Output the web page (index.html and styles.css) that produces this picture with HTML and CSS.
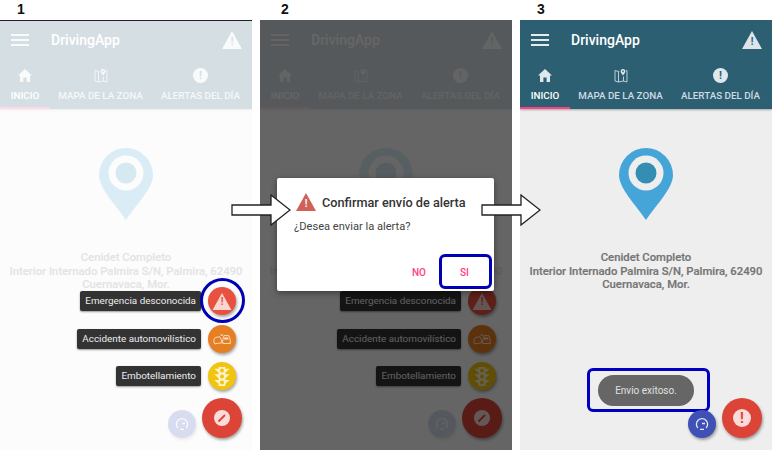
FILE: index.html
```html
<!DOCTYPE html>
<html lang="es">
<head>
  <meta charset="UTF-8">
  <title>DrivingApp</title>
  <link rel="stylesheet" href="styles.css">
</head>
<body>
  <svg class="sprites" width="0" height="0">
    <symbol id="i-warn" viewBox="0 0 20 18"><path fill="currentColor" d="M10 0 20 18H0Z"/></symbol>
    <symbol id="i-home" viewBox="0 0 14 13"><path fill="currentColor" d="M7 0 14 6.500H12V13H8.600V8.500H5.400V13H2V6.500H0Z"/></symbol>
    <symbol id="i-map" viewBox="0 0 14 15"><path fill="none" stroke="currentColor" stroke-width="0.8" d="M5.500 3 4.500 3.600 1 2.500v10.500l3.500 1 5-1 3.500 1V2.500L11.800 3M4.500 3.600V14M9.500 8.500V13"/><path fill="currentColor" fill-rule="evenodd" d="M9 1a2.300 2.300 0 0 1 2.300 2.300C11.300 5 9 7.500 9 7.500S6.700 5 6.700 3.300A2.300 2.300 0 0 1 9 1ZM9 2.500a.8.800 0 1 0 .01 0Z"/></symbol>
    <symbol id="i-gauge" viewBox="0 0 14 12"><path fill="none" stroke="currentColor" stroke-width="1.300" d="M2.800 10A5.600 5.600 0 1 1 11.200 10"/><path fill="none" stroke="currentColor" stroke-width="1.300" d="M5 11.300H9M7 5.500H10"/></symbol>
    <symbol id="i-crash" viewBox="0 0 24 16"><path fill="none" stroke="currentColor" stroke-width="1.200" d="M1 9.500 3 6l6-1 2 4 1 4-10 1.500ZM13 9l1.500-5.500H21L23 9v5H13Z"/><path fill="currentColor" d="M10 0 11.500 2.500 13.500 1 12.500 4 10.500 3.500ZM15 6h5l.8 2.500H14.400Z"/></symbol>
    <symbol id="i-light" viewBox="0 0 18 22"><path fill="currentColor" d="M5 0H13V22H5ZM0 2H5V6.500ZM18 2H13V6.500ZM0 8.500H5V13ZM18 8.500H13V13ZM0 15H5V19.500ZM18 15H13V19.500Z"/><circle cx="9" cy="4" r="2.300" fill="#f1c40f"/><circle cx="9" cy="11" r="2.300" fill="#f1c40f"/><circle cx="9" cy="18" r="2.300" fill="#f1c40f"/></symbol>
    <symbol id="i-pencil" viewBox="0 0 16 16"><circle cx="8" cy="8" r="8" fill="currentColor"/><path fill="none" stroke="#db4437" stroke-width="1.800" d="M4.500 11.500 11 5"/></symbol>
    <symbol id="i-pin" viewBox="0 0 54 72"><path fill="#45a5d8" d="M27 0A27 27 0 0 1 54 27C54 40 38 56 27 72 16 56 0 40 0 27A27 27 0 0 1 27 0Z"/><circle cx="27" cy="25" r="17.500" fill="#eee"/><circle cx="27" cy="25" r="10.500" fill="#348eb3"/></symbol>
    <symbol id="i-arrow" viewBox="0 0 60 32"><path fill="#fff" stroke="#222" stroke-width="1.300" d="M1 11H40V1L59 16 40 31V21H1Z"/></symbol>
  </svg>

  <div class="page">

    <!-- paso 1 -->
    <section class="step">
      <div class="num num-line">1</div>
      <div class="phone">
        <header class="appbar">
          <div class="toolbar">
            <div class="burger"><span></span><span></span><span></span></div>
            <div class="app-title">DrivingApp</div>
            <div class="warn"><svg class="warn-tri"><use href="#i-warn"/></svg><b>!</b></div>
          </div>
          <nav class="tabs">
            <div class="tab tab-on"><svg class="tab-ico"><use href="#i-home"/></svg>INICIO</div>
            <div class="tab tab-map"><svg class="tab-ico"><use href="#i-map"/></svg>MAPA DE LA ZONA</div>
            <div class="tab"><span class="tab-dot">!</span>ALERTAS DEL DÍA</div>
          </nav>
        </header>
        <main class="content">
          <svg class="pin"><use href="#i-pin"/></svg>
          <p class="address">Cenidet Completo<br>Interior Internado Palmira S/N, Palmira, 62490<br>Cuernavaca, Mor.</p>
        </main>
        <div class="fabs">
          <div class="fab fab-small"><svg class="gauge"><use href="#i-gauge"/></svg></div>
          <div class="fab-gap"></div>
        </div>
        <div class="veil"></div>
        <div class="fabs">
          <div class="fab fab-main"><svg class="pencil"><use href="#i-pencil"/></svg></div>
        </div>
        <div class="fab-menu">
          <div class="menu-row">
            <span class="tip">Emergencia desconocida</span>
            <div class="fab fab-mini fab-red"><svg class="mini-warn"><use href="#i-warn"/></svg><b>!</b></div>
          </div>
          <div class="menu-row">
            <span class="tip">Accidente automovilístico</span>
            <div class="fab fab-mini fab-orange"><svg class="crash"><use href="#i-crash"/></svg></div>
          </div>
          <div class="menu-row">
            <span class="tip">Embotellamiento</span>
            <div class="fab fab-mini fab-yellow"><svg class="light"><use href="#i-light"/></svg></div>
          </div>
        </div>
        <div class="ring"></div>
      </div>
    </section>

    <!-- paso 2 -->
    <section class="step">
      <div class="num">2</div>
      <div class="phone">
        <header class="appbar">
          <div class="toolbar">
            <div class="burger"><span></span><span></span><span></span></div>
            <div class="app-title">DrivingApp</div>
            <div class="warn"><svg class="warn-tri"><use href="#i-warn"/></svg><b>!</b></div>
          </div>
          <nav class="tabs">
            <div class="tab tab-on"><svg class="tab-ico"><use href="#i-home"/></svg>INICIO</div>
            <div class="tab tab-map"><svg class="tab-ico"><use href="#i-map"/></svg>MAPA DE LA ZONA</div>
            <div class="tab"><span class="tab-dot">!</span>ALERTAS DEL DÍA</div>
          </nav>
        </header>
        <main class="content">
          <svg class="pin"><use href="#i-pin"/></svg>
          <p class="address">Cenidet Completo<br>Interior Internado Palmira S/N, Palmira, 62490<br>Cuernavaca, Mor.</p>
        </main>
        <div class="fabs">
          <div class="fab fab-small"><svg class="gauge"><use href="#i-gauge"/></svg></div>
          <div class="fab-gap"></div>
        </div>
        <div class="veil"></div>
        <div class="fabs">
          <div class="fab fab-main"><svg class="pencil"><use href="#i-pencil"/></svg></div>
        </div>
        <div class="fab-menu">
          <div class="menu-row">
            <span class="tip">Emergencia desconocida</span>
            <div class="fab fab-mini fab-red"><svg class="mini-warn"><use href="#i-warn"/></svg><b>!</b></div>
          </div>
          <div class="menu-row">
            <span class="tip">Accidente automovilístico</span>
            <div class="fab fab-mini fab-orange"><svg class="crash"><use href="#i-crash"/></svg></div>
          </div>
          <div class="menu-row">
            <span class="tip">Embotellamiento</span>
            <div class="fab fab-mini fab-yellow"><svg class="light"><use href="#i-light"/></svg></div>
          </div>
        </div>
        <div class="scrim"></div>
        <div class="dialog">
          <div class="dialog-head">
            <div class="dialog-ico"><svg class="dialog-tri"><use href="#i-warn"/></svg><b>!</b></div>
            <h3>Confirmar envío de alerta</h3>
          </div>
          <p class="dialog-text">¿Desea enviar la alerta?</p>
          <div class="dialog-actions">
            <span class="btn btn-no">NO</span>
            <span class="btn btn-si">SI</span>
          </div>
        </div>
      </div>
    </section>

    <!-- paso 3 -->
    <section class="step">
      <div class="num">3</div>
      <div class="phone">
        <header class="appbar">
          <div class="toolbar">
            <div class="burger"><span></span><span></span><span></span></div>
            <div class="app-title">DrivingApp</div>
            <div class="warn"><svg class="warn-tri"><use href="#i-warn"/></svg><b>!</b></div>
          </div>
          <nav class="tabs">
            <div class="tab tab-on"><svg class="tab-ico"><use href="#i-home"/></svg>INICIO</div>
            <div class="tab tab-map"><svg class="tab-ico"><use href="#i-map"/></svg>MAPA DE LA ZONA</div>
            <div class="tab"><span class="tab-dot">!</span>ALERTAS DEL DÍA</div>
          </nav>
        </header>
        <main class="content">
          <svg class="pin"><use href="#i-pin"/></svg>
          <p class="address">Cenidet Completo<br>Interior Internado Palmira S/N, Palmira, 62490<br>Cuernavaca, Mor.</p>
        </main>
        <div class="toast-mark"><div class="toast">Envio exitoso.</div></div>
        <div class="fabs">
          <div class="fab fab-small"><svg class="gauge"><use href="#i-gauge"/></svg></div>
          <div class="fab fab-main"><span class="alert-dot">!</span></div>
        </div>
      </div>
    </section>
  </div>

  <svg class="arrow arrow-a"><use href="#i-arrow"/></svg>
  <svg class="arrow arrow-b"><use href="#i-arrow"/></svg>
</body>
</html>
```

FILE: styles.css
```css
* {
  box-sizing: border-box;
}
body {
  margin: 0;
  background: #fff;
  font-family: Roboto, "Liberation Sans", sans-serif;
  position: relative;
}
.sprites {
  position: absolute;
}
.page {
  display: flex;
  gap: 8px;
}
.step {
  width: 252px;
}
.num {
  height: 20px;
  padding-left: 17px;
  font: bold 14px/19px "Liberation Sans", sans-serif;
  color: #111;
  position: relative;
  z-index: 2;
}
.step:nth-child(2) .num {
  padding-left: 21px;
}
.num-line {
  box-shadow: 0 1px 0 #222;
}
.phone {
  position: relative;
  height: 430px;
  background: #eee;
  overflow: hidden;
}

/* barra */
.appbar {
  background: #2d5f72;
  height: 89px;
  color: #fff;
  box-shadow: 0 1px 2px rgba(0,0,0,0.3);
}
.toolbar {
  height: 40px;
  display: flex;
  align-items: center;
  padding: 0 10px 0 11px;
}
.burger {
  width: 18px;
  margin-right: 22px;
  display: grid;
  gap: 3px;
}
.burger span {
  height: 2px;
  background: #e3ebef;
}
.app-title {
  flex: 1;
  font-size: 14px;
  font-weight: 500;
}
.warn {
  position: relative;
  width: 20px;
  height: 18px;
  color: #dbe5ea;
}
.warn-tri {
  display: block;
  width: 20px;
  height: 18px;
}
.warn b {
  position: absolute;
  left: 0;
  right: 0;
  top: 5px;
  text-align: center;
  font-size: 10px;
  line-height: 12px;
  color: #2d5f72;
}
.tabs {
  display: flex;
  height: 49px;
}
.tab {
  padding: 8px 10px 0;
  flex: 0 0 auto;
  text-align: center;
  font-size: 9.8px;
  font-weight: 500;
  color: #cddbe1;
  white-space: nowrap;
  display: flex;
  flex-direction: column;
  align-items: center;
  gap: 7px;
  border-bottom: 2px solid transparent;
}
.tab-on {
  width: 50px;
  color: #fff;
  padding: 8px 0 0;
  border-bottom-color: #ff4081;
}
.tab-map {
  width: 101px;
}
.tab-ico {
  width: 14px;
  height: 15px;
  display: block;
  color: #dfe8ec;
}
.tab-dot {
  width: 15px;
  height: 15px;
  border-radius: 50%;
  background: #dfe8ec;
  color: #2d5f72;
  font-size: 11px;
  line-height: 15px;
  font-weight: 700;
}

/* contenido */
.content {
  padding-top: 39px;
  text-align: center;
}
.pin {
  display: block;
  width: 54px;
  height: 72px;
  margin: 0 auto;
}
.address {
  margin: 31px 0 0;
  font-size: 11.3px;
  line-height: 13.5px;
  font-weight: 500;
  color: #757575;
  -webkit-text-stroke: 0.2px #757575;
}

/* botones */
.fabs {
  position: absolute;
  right: 10px;
  bottom: 12px;
  display: flex;
  align-items: flex-end;
  gap: 6px;
}
.fab {
  border-radius: 50%;
  display: flex;
  align-items: center;
  justify-content: center;
  position: relative;
  box-shadow: 1px 2px 3px rgba(0,0,0,0.35);
}
.fab-gap {
  width: 40px;
}
.fab-small {
  width: 28px;
  height: 28px;
  background: #3f51b5;
  color: #e5e8f6;
}
.gauge {
  width: 14px;
  height: 12px;
}
.fab-main {
  width: 40px;
  height: 40px;
  background: #db4437;
  color: #fbdcd9;
}
.pencil {
  width: 16px;
  height: 16px;
}
.alert-dot {
  width: 18px;
  height: 18px;
  border-radius: 50%;
  background: #fbdcd9;
  color: #db4437;
  font-size: 14px;
  font-weight: 700;
  line-height: 18px;
  text-align: center;
}
.fab-menu {
  position: absolute;
  right: 16px;
  top: 267px;
  display: grid;
  gap: 9.5px;
}
.menu-row {
  display: flex;
  justify-content: flex-end;
  align-items: center;
  gap: 7px;
}
.tip {
  background: #333;
  color: #eee;
  font-size: 9.9px;
  line-height: 20px;
  padding: 0 5px;
  border-radius: 2px;
  box-shadow: 0 1px 2px rgba(0,0,0,0.4);
  white-space: nowrap;
}
.fab-mini {
  width: 28px;
  height: 28px;
  color: #fde3d0;
}
.fab-red {
  background: #e8503f;
}
.fab-orange {
  background: #e67e22;
}
.fab-yellow {
  background: #f1c40f;
  color: #fdf3c8;
}
.mini-warn {
  width: 20px;
  height: 17px;
  color: #fbd5d0;
}
.fab-red b {
  position: absolute;
  left: 0;
  right: 0;
  top: 9px;
  text-align: center;
  font-size: 10px;
  line-height: 12px;
  color: #e8503f;
}
.crash {
  width: 18px;
  height: 12px;
}
.light {
  width: 16px;
  height: 19px;
}
.ring {
  position: absolute;
  left: 200px;
  top: 258px;
  width: 45px;
  height: 45px;
  border: 3px solid #0000b4;
  border-radius: 50%;
}

/* capas */
.veil {
  position: absolute;
  inset: 0;
  background: rgba(255,255,255,0.8);
}
.scrim {
  position: absolute;
  inset: 0;
  background: rgba(0,0,0,0.6);
}

/* dialogo */
.dialog {
  position: absolute;
  left: 17px;
  top: 158px;
  width: 217px;
  height: 113px;
  background: #fff;
  border-radius: 2px;
  box-shadow: 0 2px 6px rgba(0,0,0,0.4);
  padding: 15px 17px 0;
  color: #333;
}
.dialog-head {
  display: flex;
  align-items: center;
  gap: 6px;
}
.dialog-ico {
  position: relative;
  width: 20px;
  height: 18px;
  margin-left: 2px;
  color: #cf6258;
}
.dialog-tri {
  display: block;
  width: 20px;
  height: 18px;
}
.dialog-ico b {
  position: absolute;
  left: 0;
  right: 0;
  top: 5px;
  text-align: center;
  font-size: 10px;
  line-height: 12px;
  color: #fff;
}
h3 {
  margin: 0;
  font-size: 12.7px;
  font-weight: 500;
  white-space: nowrap;
}
.dialog-text {
  margin: 9px 0 0;
  font-size: 11.1px;
  line-height: 14px;
  color: #444;
}
.dialog-actions {
  position: absolute;
  right: 2px;
  bottom: 2px;
  display: flex;
  align-items: center;
  gap: 13px;
}
.btn {
  font-size: 10px;
  font-weight: 500;
  color: #ff4081;
}
.btn-no {
  margin-top: 2px;
}
.btn-si {
  width: 53px;
  height: 35px;
  line-height: 31px;
  padding-right: 2px;
  text-align: center;
  border: 3px solid #0000b4;
  border-radius: 6px;
}

/* aviso */
.toast-mark {
  position: absolute;
  left: 67px;
  top: 348px;
  width: 123px;
  height: 44px;
  border: 3px solid #0000c0;
  border-radius: 6px;
  display: flex;
  align-items: center;
  justify-content: center;
}
.toast {
  width: 96px;
  height: 31px;
  margin-right: 5px;
  border-radius: 16px;
  background: #666;
  color: #e0e0e0;
  font-size: 10px;
  line-height: 31px;
  text-align: center;
}

/* flechas entre pasos */
.arrow {
  position: absolute;
  top: 194px;
  width: 60px;
  height: 32px;
}
.arrow-a {
  left: 231px;
}
.arrow-b {
  left: 481px;
}
```
